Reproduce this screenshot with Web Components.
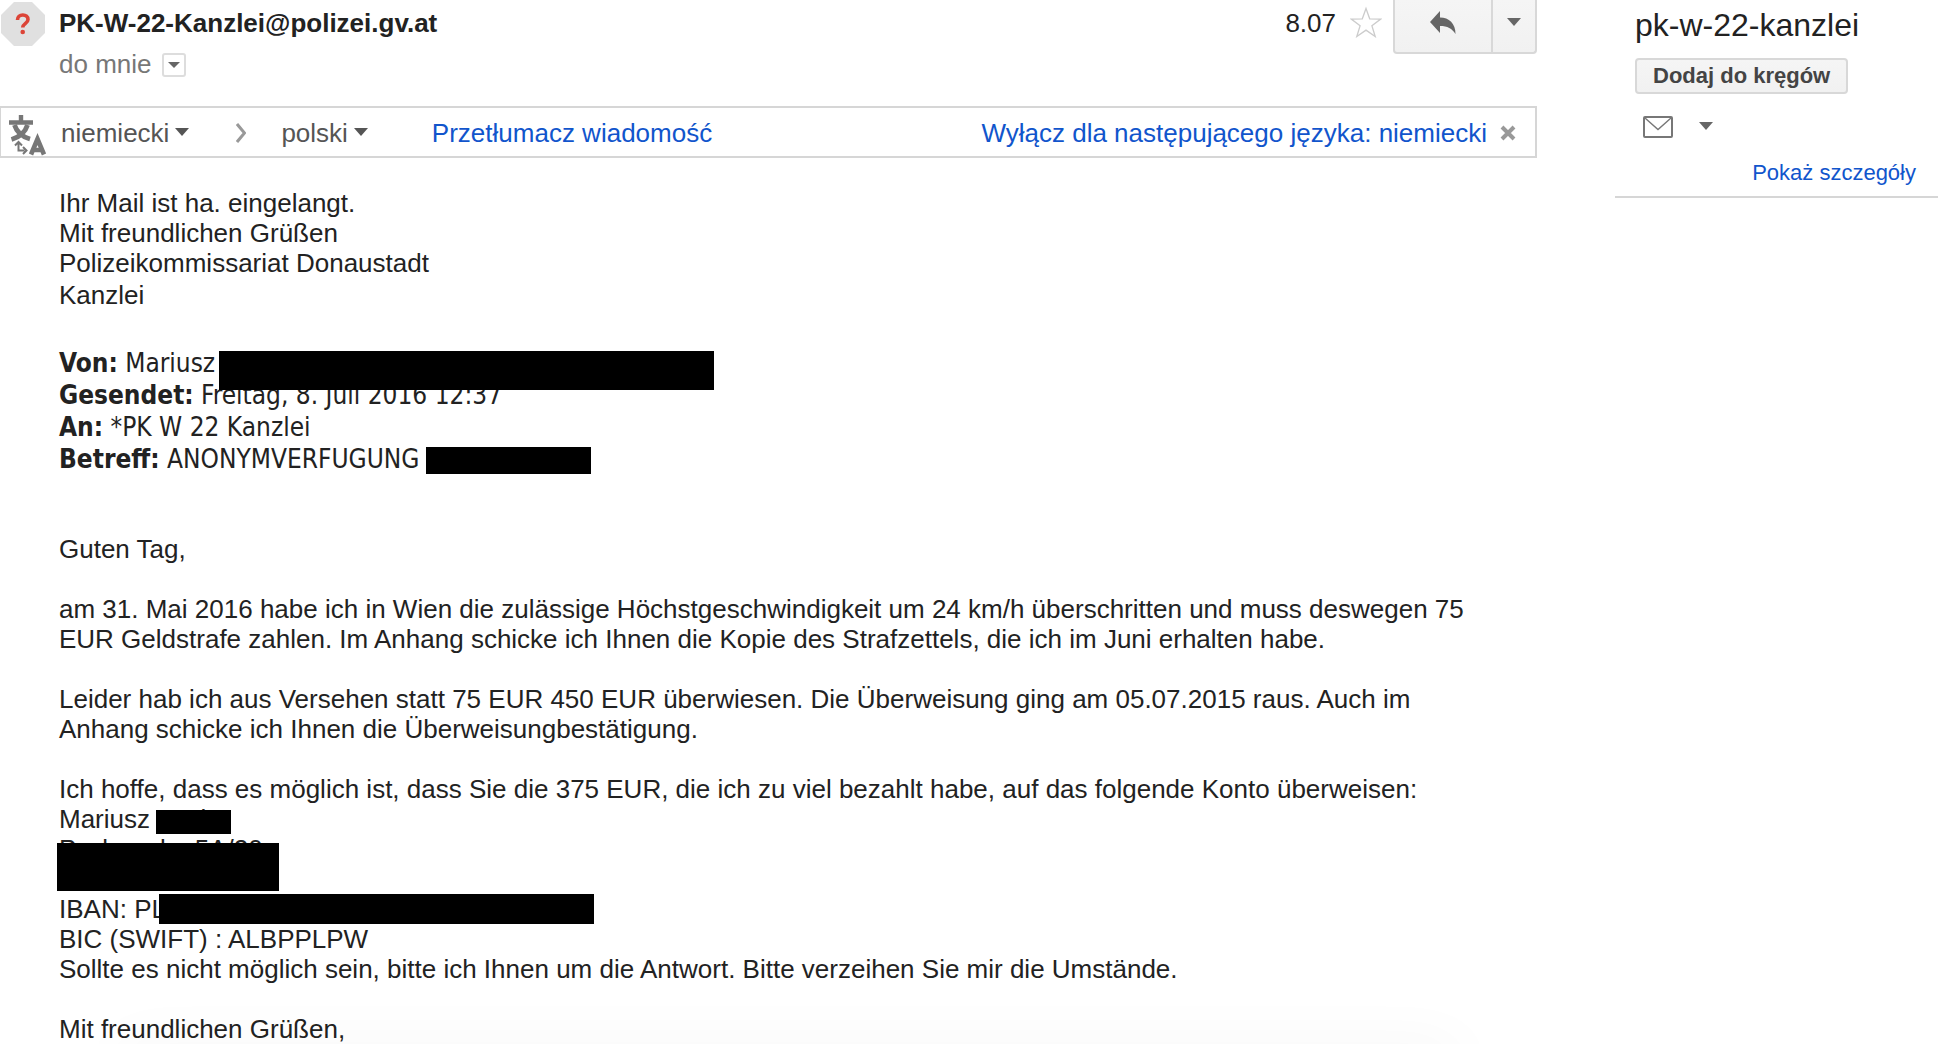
<!DOCTYPE html>
<html lang="pl">
<head>
<meta charset="utf-8">
<title>Poczta</title>
<style>
  body {
    margin: 0;
    background: #fff;
    color: #222;
    font-family: "Liberation Sans", Arial, sans-serif;
    font-size: 26px;
    line-height: 30px;
    overflow: hidden;
  }
</style>
</head>
<body>
<mail-page>
  <mail-header slot="main" sender="PK-W-22-Kanzlei@polizei.gv.at" recipient="do mnie" date="8.07"></mail-header>
  <translate-bar slot="main" from="niemiecki" to="polski"></translate-bar>
  <mail-body slot="main">
    <div>Ihr Mail ist ha. eingelangt.</div>
    <div>Mit freundlichen Grüßen</div>
    <div>Polizeikommissariat Donaustadt</div>
    <div class="last">Kanzlei</div>
    <mail-quote>
      <div><b>Von:</b> Mariusz <redacted-bar style="--x: 160px; --y: 4px; --w: 495px; --h: 39px"></redacted-bar></div>
      <div><b>Gesendet:</b> Freitag, 8. Juli 2016 12:37</div>
      <div><b>An:</b> *PK W 22 Kanzlei</div>
      <div><b>Betreff:</b> ANONYMVERFUGUNG <redacted-bar style="--x: 367px; --y: 4px; --w: 165px; --h: 27px"></redacted-bar></div>
    </mail-quote>
    <p>Guten Tag,</p>
    <p>am 31. Mai 2016 habe ich in Wien die zulässige Höchstgeschwindigkeit um 24 km/h überschritten und muss deswegen 75 EUR Geldstrafe zahlen. Im Anhang schicke ich Ihnen die Kopie des Strafzettels, die ich im Juni erhalten habe.</p>
    <p>Leider hab ich aus Versehen statt 75 EUR 450 EUR überwiesen. Die Überweisung ging am 05.07.2015 raus. Auch im Anhang schicke ich Ihnen die Überweisungbestätigung.</p>
    <div>Ich hoffe, dass es möglich ist, dass Sie die 375 EUR, die ich zu viel bezahlt habe, auf das folgende Konto überweisen:</div>
    <div>Mariusz Pxxlx<redacted-bar style="--x: 97px; --y: 6px; --w: 75px; --h: 24px"></redacted-bar></div>
    <div>Pxxlxxxxlxr 5A/20<redacted-bar style="--x: -2px; --y: 9px; --w: 222px; --h: 48px"></redacted-bar></div>
    <div>&nbsp;</div>
    <div>IBAN: PL<redacted-bar style="--x: 100px; --y: 0px; --w: 435px; --h: 30px"></redacted-bar></div>
    <div>BIC (SWIFT) : ALBPPLPW</div>
    <p>Sollte es nicht möglich sein, bitte ich Ihnen um die Antwort. Bitte verzeihen Sie mir die Umstände.</p>
    <div>Mit freundlichen Grüßen,</div>
  </mail-body>
  <contact-card slot="side" name="pk-w-22-kanzlei"></contact-card>
</mail-page>

<script>
const define = (name, html, setup) => {
  const template = document.createElement('template');
  template.innerHTML = html;
  window.customElements.define(name, class extends HTMLElement {
    static get observedAttributes() {
      return ['value'];
    }

    constructor() {
      super();
      this._root = this.attachShadow({ mode: 'open' });
      this._root.appendChild(template.content.cloneNode(true));
    }

    connectedCallback() {
      if (setup) setup(this, this._root);
    }

    attributeChangedCallback() {
      if (setup) setup(this, this._root);
    }
  });
};

define('mail-page', `
  <style>
    :host {
      display: grid;
      grid-template-columns: minmax(0, 1fr) 323px;
      column-gap: 78px;
      position: relative;
      height: 100vh;
      overflow: hidden;
    }
    .shade {
      position: absolute;
      left: 120px;
      right: 480px;
      top: 100%;
      height: 40px;
      box-shadow: 0 0 60px rgba(0, 0, 0, 0.04);
      pointer-events: none;
    }
  </style>
  <main><slot name="main"></slot></main>
  <aside><slot name="side"></slot></aside>
  <div class="shade"></div>
`);

define('caret-icon', `
  <style>
    :host { display: block; width: 14px; height: 8px; color: #666; }
    svg { display: block; width: 100%; height: 100%; }
  </style>
  <svg viewBox="0 0 14 8" preserveAspectRatio="none" aria-hidden="true"><path d="M0 0h14L7 8z" fill="currentColor"/></svg>
`);

define('redacted-bar', `
  <style>
    :host {
      position: absolute;
      left: var(--x);
      top: var(--y);
      width: var(--w);
      height: var(--h);
      background: #000;
      z-index: 1;
    }
  </style>
`);

define('mail-header', `
  <style>
    :host { display: flex; align-items: flex-start; height: 106px; }
    button { font: inherit; padding: 0; margin: 0; cursor: pointer; box-sizing: border-box; }
    .avatar { flex: none; width: 46px; height: 48px; margin-right: 13px; }
    .who { flex: 1; padding-top: 8px; }
    h3 { margin: 0; font-size: 26px; line-height: 30px; }
    .to { display: flex; align-items: center; gap: 10px; padding-top: 11px; color: #777; }
    .details {
      display: grid;
      place-items: center;
      width: 24px;
      height: 24px;
      margin-top: 2px;
      background: #fff;
      border: 2px solid #ddd;
      border-radius: 3px;
    }
    .details caret-icon { width: 12px; height: 6px; }
    .date { padding-top: 8px; }
    .star { margin: 6px 11px 0 14px; width: 32px; height: 32px; background: none; border: 0; }
    .star svg { display: block; }
    .actions { display: flex; }
    .actions button {
      display: grid;
      place-items: center;
      height: 54px;
      padding-bottom: 6px;
      border: 2px solid #d8d8d8;
      border-top: 0;
      background: linear-gradient(#f5f5f5, #f1f1f1);
    }
    .reply { width: 100px; border-bottom-left-radius: 4px; }
    .more { width: 46px; margin-left: -2px; border-bottom-right-radius: 4px; }
    .actions .more { padding-bottom: 8px; }
  </style>
  <svg class="avatar" viewBox="0 0 46 48" aria-hidden="true">
    <path d="M14 2h18l13 13v18L32 46H14L1 33V15z" fill="#e0e0e0"/>
    <path d="M17.500 20c0-3.200 2.200-5 5.300-5s5.200 1.700 5.200 4.500c0 4-5.300 4.300-5.300 8" fill="none" stroke="#dc4437" stroke-width="3.600"/>
    <circle cx="22.700" cy="32" r="2.300" fill="#dc4437"/>
  </svg>
  <div class="who">
    <h3></h3>
    <div class="to"><span></span><button class="details" aria-label="Pokaż szczegóły"><caret-icon></caret-icon></button></div>
  </div>
  <span class="date"></span>
  <button class="star" aria-label="Oznacz gwiazdką">
    <svg width="32" height="32" viewBox="0 0 32 32"><path d="M16 2.500l3.700 10.300 11 .3-8.800 6.700 3.300 10.700-9.200-6.400-9.200 6.400 3.300-10.700-8.800-6.700 11-.3z" fill="#fff" stroke="#ccc" stroke-width="1.300"/></svg>
  </button>
  <div class="actions">
    <button class="reply" aria-label="Odpowiedz">
      <svg width="26" height="24" viewBox="0 0 26 24"><path d="M0 11L10 0v6.500c9 0 15.500 6 15.500 16.500C22 17.500 17.500 15 10 15v7z" fill="#666"/></svg>
    </button>
    <button class="more" aria-label="Więcej"><caret-icon></caret-icon></button>
  </div>
`, (host, root) => {
  root.querySelector('h3').textContent = host.getAttribute('sender');
  root.querySelector('.to span').textContent = host.getAttribute('recipient');
  root.querySelector('.date').textContent = host.getAttribute('date');
});

define('language-select', `
  <style>
    :host { display: flex; align-items: center; gap: 6px; color: #555; }
    select {
      appearance: none;
      field-sizing: content;
      font: inherit;
      color: inherit;
      background: none;
      border: 0;
      margin: 0;
      padding: 0;
    }
    caret-icon { pointer-events: none; color: #555; margin-bottom: 2px; }
  </style>
  <select><option></option></select>
  <caret-icon></caret-icon>
`, (host, root) => {
  root.querySelector('option').textContent = host.getAttribute('value');
  root.querySelector('select').setAttribute('aria-label', host.getAttribute('label'));
});

define('translate-bar', `
  <style>
    :host {
      display: flex;
      align-items: center;
      box-sizing: border-box;
      height: 52px;
      border: 2px solid #d6d6d6;
      border-left-width: 1px;
      padding: 2px 19px 0 0;
    }
    a { color: #15c; text-decoration: none; }
    .icon { flex: none; margin: 3px 14px 0 7px; }
    .chevron { margin: 0 35px 0 47px; }
    .translate { margin-left: 64px; }
    .off { margin-left: auto; }
    button { background: none; border: 0; padding: 0; margin: 0 0 0 13px; width: 16px; height: 16px; cursor: pointer; }
    button svg { display: block; }
  </style>
  <svg class="icon" width="39" height="42" viewBox="0 0 39 42" aria-hidden="true">
    <g fill="none" stroke="#777">
      <path d="M13 1v8M1 8.500h24" stroke-width="4.400"/>
      <path d="M6.500 11c2 6.500 7 11.500 15.500 14M19.500 11c-2 6.500-8 12-16 14.500" stroke-width="4.800"/>
      <path d="M10.500 28v8.500h6M7 31.500l3.500-3.500 3.500 3.500M15 33l3.500 3.500-3.500 3.500" stroke-width="2"/>
      <path d="M23 40.500l6.500-15.500 6.500 15.500M25 36h9" stroke-width="4.600"/>
    </g>
  </svg>
  <language-select class="from" label="Język źródłowy"></language-select>
  <svg class="chevron" width="10" height="20" viewBox="0 0 10 20" aria-hidden="true"><path d="M1 1l7.500 9L1 19" fill="none" stroke="#999" stroke-width="3"/></svg>
  <language-select class="to" label="Język docelowy"></language-select>
  <a class="translate" href="#">Przetłumacz wiadomość</a>
  <a class="off" href="#">Wyłącz dla następującego języka: <span></span></a>
  <button aria-label="Zamknij">
    <svg width="16" height="16" viewBox="0 0 16 16"><path d="M2 2l12 12M14 2L2 14" stroke="#999" stroke-width="4"/></svg>
  </button>
`, (host, root) => {
  root.querySelector('.from').setAttribute('value', host.getAttribute('from'));
  root.querySelector('.to').setAttribute('value', host.getAttribute('to'));
  root.querySelector('.off span').textContent = host.getAttribute('from');
});

define('mail-body', `
  <style>
    :host { display: block; padding: 30px 40px 0 59px; }
    ::slotted(div) { position: relative; }
    ::slotted(.last) { line-height: 34px; }
    ::slotted(p) { margin: 0 0 30px; }
  </style>
  <slot></slot>
`);

define('mail-quote', `
  <style>
    :host {
      display: block;
      margin: 35px 0 59px;
      font-family: "DejaVu Sans Condensed", "Noto Sans", Tahoma, sans-serif;
      font-size: 26px;
      line-height: 32px;
    }
    ::slotted(div) { position: relative; }
  </style>
  <slot></slot>
`);

define('contact-card', `
  <style>
    :host { display: block; padding: 6px 22px 9px 20px; border-bottom: 2px solid #d6d6d6; }
    h2 { margin: 0 0 14px; font-size: 32px; font-weight: normal; line-height: 38px; }
    button { font: inherit; cursor: pointer; margin: 0; }
    .add {
      display: block;
      box-sizing: border-box;
      height: 36px;
      padding: 0 16px;
      border: 2px solid #d8d8d8;
      border-radius: 4px;
      background: linear-gradient(#f5f5f5, #f1f1f1);
      color: #444;
      font-size: 22px;
      font-weight: bold;
    }
    .tools { display: flex; align-items: center; gap: 26px; padding: 22px 0 0 8px; }
    .tools button { background: none; border: 0; padding: 0; }
    .tools svg { display: block; }
    .tools caret-icon { margin-bottom: 2px; }
    .more { display: block; margin-top: 21px; text-align: right; font-size: 22px; line-height: 28px; color: #15c; text-decoration: none; }
  </style>
  <h2></h2>
  <button class="add">Dodaj do kręgów</button>
  <div class="tools">
    <button aria-label="Wyślij e-mail">
      <svg width="30" height="22" viewBox="0 0 30 22"><rect x="1" y="1" width="28" height="20" rx="1" fill="#fff" stroke="#777" stroke-width="2"/><path d="M2 2l13 11.500L28 2" fill="none" stroke="#777" stroke-width="1.400"/></svg>
    </button>
    <button aria-label="Więcej"><caret-icon></caret-icon></button>
  </div>
  <a class="more" href="#">Pokaż szczegóły</a>
`, (host, root) => {
  root.querySelector('h2').textContent = host.getAttribute('name');
});
</script>
</body>
</html>
